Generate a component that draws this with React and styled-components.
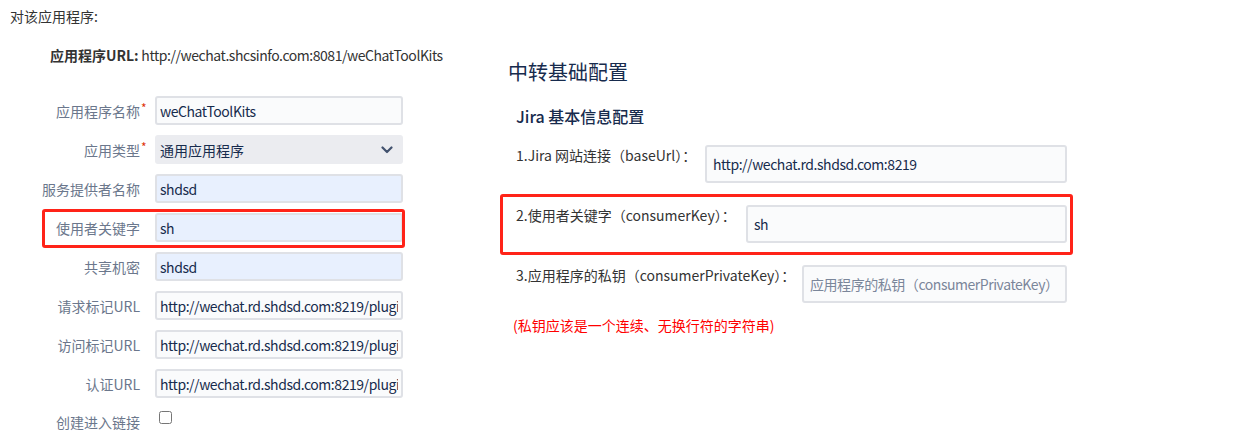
import React from "react";
import styled, { createGlobalStyle } from "styled-components";

const GlobalStyle = createGlobalStyle`
  body {
    margin: 0;
    background: #fff;
    font-family: "Noto Sans CJK SC", "Noto Sans", sans-serif;
    font-size: 14px;
    color: #333;
  }
`;

const leftRows = [
  { label: "应用程序名称", required: true, value: "weChatToolKits" },
  { label: "应用类型", required: true, select: "通用应用程序" },
  { label: "服务提供者名称", value: "shdsd", filled: true },
  { label: "使用者关键字", value: "sh", filled: true, marked: true },
  { label: "共享机密", value: "shdsd", filled: true },
  { label: "请求标记URL", value: "http://wechat.rd.shdsd.com:8219/plugins/servlet/oauth/request-token" },
  { label: "访问标记URL", value: "http://wechat.rd.shdsd.com:8219/plugins/servlet/oauth/access-token" },
  { label: "认证URL", value: "http://wechat.rd.shdsd.com:8219/plugins/servlet/oauth/authorize" },
];

const ChevronDown = () => (
  <svg width="12" height="8" viewBox="0 0 12 8">
    <path d="M1.5 1.5 L6 6 L10.5 1.5" fill="none" stroke="#42526e" strokeWidth="2.2" strokeLinecap="round" strokeLinejoin="round" />
  </svg>
);

const App = () => {
  return (
    <>
      <GlobalStyle />
      <Page>
        <Intro>对该应用程序:</Intro>
        <Columns>
          <LeftColumn>
            <AppUrl>
              <b>应用程序URL:</b> http://wechat.shcsinfo.com:8081/weChatToolKits
            </AppUrl>
            <LeftForm>
              {leftRows.map((row) => (
                <LeftRow key={row.label} $marked={row.marked}>
                  <LeftLabel>
                    {row.label}
                    {row.required && <Required>*</Required>}
                  </LeftLabel>
                  {row.select ? (
                    <SelectBox>
                      <span>{row.select}</span>
                      <ChevronDown />
                    </SelectBox>
                  ) : (
                    <LeftInput $filled={row.filled} defaultValue={row.value} readOnly />
                  )}
                </LeftRow>
              ))}
              <CheckRow>
                <LeftLabel className="top">创建进入链接</LeftLabel>
                <Check type="checkbox" />
              </CheckRow>
            </LeftForm>
          </LeftColumn>

          <RightColumn>
            <Heading>中转基础配置</Heading>
            <SubHeading>Jira 基本信息配置</SubHeading>
            <RightForm>
              <RightRow>
                <RightLabel $width={189}>1.Jira 网站连接（baseUrl）：</RightLabel>
                <RightInput defaultValue="http://wechat.rd.shdsd.com:8219" readOnly />
              </RightRow>
              <RightRow $marked>
                <RightLabel $width={230}>2.使用者关键字（consumerKey）：</RightLabel>
                <RightInput defaultValue="sh" readOnly />
              </RightRow>
              <RightRow>
                <RightLabel $width={286}>3.应用程序的私钥（consumerPrivateKey）：</RightLabel>
                <RightInput placeholder="应用程序的私钥（consumerPrivateKey）" />
              </RightRow>
            </RightForm>
            <Note>(私钥应该是一个连续、无换行符的字符串)</Note>
          </RightColumn>
        </Columns>
      </Page>
    </>
  );
};

export default App;

const Page = styled.div`
  width: 1242px;
  height: 445px;
  overflow: hidden;
`;

const Intro = styled.div`
  padding: 6px 10px 0px 10px;
  line-height: 20px;
  color: #333;
`;

const Columns = styled.div`
  display: grid;
  grid-template-columns: 500px 573px;
`;

const LeftColumn = styled.div`
  display: flex;
  flex-direction: column;
  padding: 19px 0px 0px 0px;
`;

const AppUrl = styled.div`
  padding: 0px 0px 0px 50px;
  line-height: 20px;
  letter-spacing: -0.45px;
  color: #333;
  b {
    font-weight: 700;
    letter-spacing: 0px;
  }
`;

const LeftForm = styled.div`
  display: flex;
  flex-direction: column;
  gap: 10px;
  margin: 31px 0px 0px 0px;
`;

const LeftRow = styled.div`
  position: relative;
  display: grid;
  grid-template-columns: 140px 248px;
  column-gap: 15px;
  align-items: center;
  height: 29px;

  &::after {
    content: "";
    display: ${(p) => (p.$marked ? "block" : "none")};
    position: absolute;
    left: 42px;
    right: 95px;
    top: -4px;
    bottom: -6px;
    border: 3px solid #ff2318;
    border-radius: 3px;
    pointer-events: none;
  }
`;

const LeftLabel = styled.div`
  position: relative;
  text-align: right;
  color: #6b778c;
  line-height: 20px;
  white-space: nowrap;

  &.top {
    align-self: start;
    padding: 4px 0px 0px 0px;
  }
`;

const Required = styled.span`
  position: absolute;
  left: 100%;
  top: -3px;
  margin: 0px 0px 0px 1px;
  color: #de350b;
  font-size: 12px;
`;

const LeftInput = styled.input`
  box-sizing: border-box;
  width: 248px;
  height: 29px;
  padding: 0px 3px;
  border: 2px solid #dfe1e6;
  border-radius: 3px;
  background: ${(p) => (p.$filled ? "#e8f0fe" : "#fafbfc")};
  color: #172b4d;
  font-family: "Noto Sans CJK SC", "Noto Sans", sans-serif;
  font-size: 14px;
  letter-spacing: -0.45px;
  outline: none;
`;

const SelectBox = styled.div`
  box-sizing: border-box;
  display: flex;
  align-items: center;
  justify-content: space-between;
  width: 248px;
  height: 29px;
  padding: 0px 10px 0px 5px;
  border-radius: 3px;
  background: #ebecf0;
  color: #172b4d;
`;

const CheckRow = styled(LeftRow)`
  align-items: start;
  height: 30px;
`;

const Check = styled.input`
  width: 13px;
  height: 13px;
  margin: 3px 0px 0px 4px;
`;

const RightColumn = styled.div`
  display: flex;
  flex-direction: column;
`;

const Heading = styled.div`
  margin: 32px 0px 0px 0px;
  padding: 0px 0px 0px 8px;
  font-size: 20px;
  line-height: 28px;
  color: #172b4d;
`;

const SubHeading = styled.div`
  margin: 18px 0px 0px 0px;
  padding: 0px 0px 0px 16px;
  font-size: 16px;
  font-weight: 500;
  line-height: 24px;
  color: #172b4d;
`;

const RightForm = styled.div`
  display: flex;
  flex-direction: column;
  gap: 22px;
  margin: 17px 0px 0px 0px;
`;

const RightRow = styled.div`
  position: relative;
  display: flex;
  align-items: flex-start;
  padding: 0px 6px 0px 16px;

  &::after {
    content: "";
    display: ${(p) => (p.$marked ? "block" : "none")};
    position: absolute;
    left: 0px;
    right: 0px;
    top: -11px;
    bottom: -12px;
    border: 3px solid #ff2318;
    border-radius: 3px;
    pointer-events: none;
  }
`;

const RightLabel = styled.div`
  flex: 0 0 ${(p) => p.$width}px;
  line-height: 20px;
  color: #333;
  white-space: nowrap;
`;

const RightInput = styled.input`
  box-sizing: border-box;
  flex: 1;
  min-width: 0;
  height: 38px;
  padding: 0px 6px;
  border: 2px solid #dfe1e6;
  border-radius: 3px;
  background: #fafbfc;
  color: #172b4d;
  font-family: "Noto Sans CJK SC", "Noto Sans", sans-serif;
  font-size: 14px;
  letter-spacing: -0.45px;
  outline: none;

  &::placeholder {
    color: #7a869a;
  }
`;

const Note = styled.div`
  margin: 12px 0px 0px 0px;
  padding: 0px 0px 0px 13px;
  line-height: 20px;
  color: #ff0000;
`;
